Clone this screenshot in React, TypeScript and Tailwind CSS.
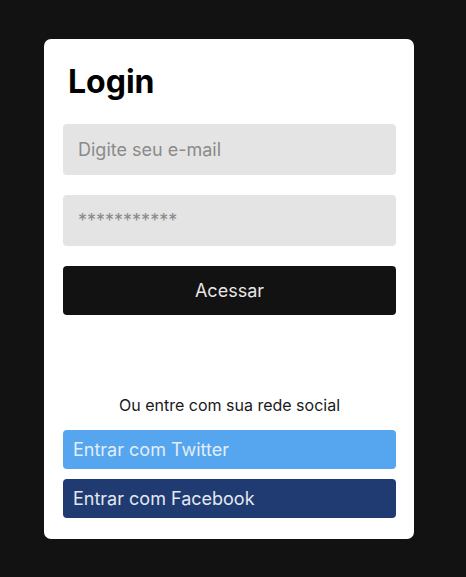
import React from "react";

export default function App() {
  return (
    <div className="min-h-[577px] w-full bg-[#121212] pt-[39px] font-['Inter','Liberation_Sans',sans-serif]">
      <div className="ml-[44px] flex w-[370px] flex-col rounded-[7px] bg-white pt-[23px] pr-[18px] pb-[21px] pl-[19px]">
        <h1 className="pl-[5px] text-[32px] leading-[39px] font-bold text-black">Login</h1>

        <input
          type="email"
          placeholder="Digite seu e-mail"
          className="mt-[23px] h-[51px] w-full rounded-[4px] bg-[#e4e4e4] px-[15px] text-[18px] text-[#333] outline-none placeholder:text-[#8a8a8a]"
        />
        <input
          type="password"
          placeholder="***********"
          className="mt-[20px] h-[51px] w-full rounded-[4px] bg-[#e4e4e4] px-[15px] text-[18px] text-[#333] outline-none placeholder:text-[#8a8a8a]"
        />
        <button className="mt-[20px] h-[49px] w-full rounded-[4px] bg-[#121212] text-[18px] text-[#e6e6e6]">
          Acessar
        </button>

        <p className="mt-[78px] text-center text-[16px] leading-[24px] text-[#1a1a1a]">
          Ou entre com sua rede social
        </p>

        <button className="mt-[13px] h-[39px] w-full rounded-[4px] bg-[#55a5ef] px-[10px] text-left text-[18px] text-[#e3edf9]">
          Entrar com Twitter
        </button>
        <button className="mt-[10px] h-[39px] w-full rounded-[4px] bg-[#1f3b71] px-[10px] text-left text-[18px] text-[#e3e8f0]">
          Entrar com Facebook
        </button>
      </div>
    </div>
  );
}
